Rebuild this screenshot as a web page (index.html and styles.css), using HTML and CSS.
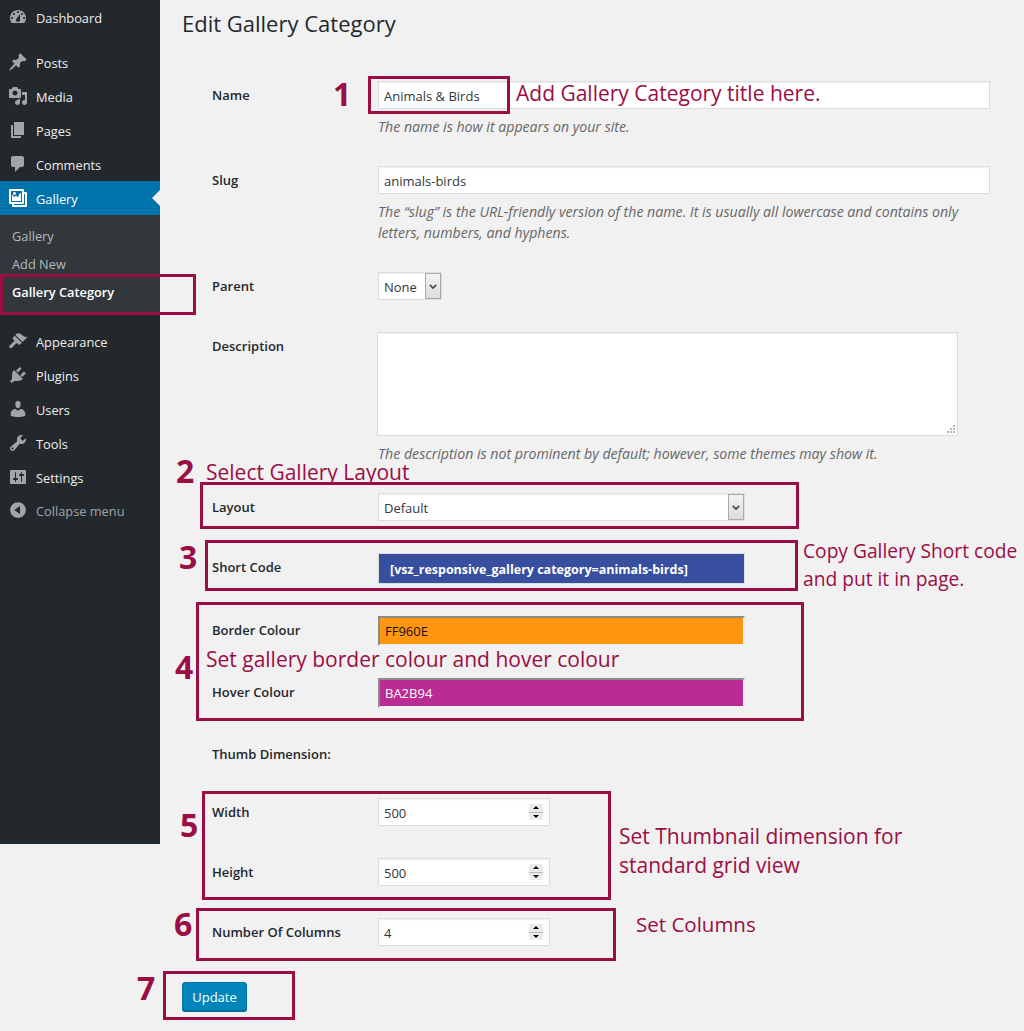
FILE: index.html
```html
<!DOCTYPE html>
<html lang="en">
  <head>
    <meta charset="UTF-8" />
    <meta name="viewport" content="width=device-width, initial-scale=1.0" />
    <title>Edit Gallery Category</title>
    <link rel="stylesheet" href="styles.css">
  </head>
  <body>
    <nav class="sidebar">
      <a class="menu-item" href="#"><svg viewBox="0 0 20 20"><path fill-rule="evenodd" d="M3.76 16h12.48c1.1-1.37 1.76-3.11 1.76-5 0-4.42-3.58-8-8-8s-8 3.58-8 8c0 1.89.66 3.63 1.76 5zM10 4c.55 0 1 .45 1 1s-.45 1-1 1-1-.45-1-1 .45-1 1-1zM6 6c.55 0 1 .45 1 1s-.45 1-1 1-1-.45-1-1 .45-1 1-1zm8 0c.55 0 1 .45 1 1s-.45 1-1 1-1-.45-1-1 .45-1 1-1zm-5.37 5.55L12 7v6c0 1.1-.9 2-2 2s-2-.9-2-2c0-.57.24-1.08.63-1.45zM4 10c.55 0 1 .45 1 1s-.45 1-1 1-1-.45-1-1 .45-1 1-1zm12 0c.55 0 1 .45 1 1s-.45 1-1 1-1-.45-1-1 .45-1 1-1z"/></svg>Dashboard</a>
      <div class="menu-sep"></div>
      <a class="menu-item" href="#"><svg viewBox="0 0 20 20"><path d="M10.44 3.02l1.82-1.82 6.36 6.35-1.83 1.82c-1.05-.68-2.48-.57-3.41.36l-.75.75c-.92.93-1.04 2.35-.35 3.41l-1.83 1.82-2.41-2.41-2.8 2.79c-.42.42-3.38 2.71-3.8 2.29s1.86-3.39 2.28-3.81l2.79-2.79L4.1 9.36l1.83-1.82c1.05.69 2.48.57 3.4-.36l.75-.75c.93-.92 1.05-2.35.36-3.41z"/></svg>Posts</a>
      <a class="menu-item" href="#"><svg viewBox="0 0 20 20"><path fill-rule="evenodd" d="M13 11V4c0-.55-.45-1-1-1h-1.67L9 1H5L3.67 3H2c-.55 0-1 .45-1 1v7c0 .55.45 1 1 1h10c.55 0 1-.45 1-1zM7 4.5c1.38 0 2.5 1.12 2.5 2.5S8.38 9.5 7 9.5 4.5 8.38 4.5 7 5.62 4.5 7 4.5zM14 6h5v10.5c0 1.38-1.12 2.5-2.5 2.5S14 17.88 14 16.5s1.12-2.5 2.5-2.5c.17 0 .34.02.5.05V9h-3V6zm-4 8.05V13h2v3.5c0 1.38-1.12 2.5-2.5 2.5S7 17.88 7 16.5 8.12 14 9.5 14c.17 0 .34.02.5.05z"/></svg>Media</a>
      <a class="menu-item" href="#"><svg viewBox="0 0 20 20"><path d="M6 15V2h10v13H6zm-1 1h8v2H3V5h2v11z"/></svg>Pages</a>
      <a class="menu-item" href="#"><svg viewBox="0 0 20 20"><path d="M5 2h9c1.1 0 2 .9 2 2v7c0 1.1-.9 2-2 2h-2l-5 5v-5H5c-1.1 0-2-.9-2-2V4c0-1.1.9-2 2-2z"/></svg>Comments</a>
      <a class="menu-item active" href="#"><svg viewBox="0 0 20 20"><path fill-rule="evenodd" d="M16 4h1.96c.57 0 1.04.47 1.04 1.04v12.92c0 .57-.47 1.04-1.04 1.04H5.04C4.47 19 4 18.53 4 17.96V16H2.04C1.47 16 1 15.53 1 14.96V2.04C1 1.47 1.47 1 2.04 1h12.92c.57 0 1.04.47 1.04 1.04V4zM3 14h11V3H3v11zm5-8.5C8 4.67 7.33 4 6.5 4S5 4.67 5 5.5 5.67 7 6.5 7 8 6.33 8 5.5zm2 4.5s1-5 3-5v8H4V7c2 0 2 3 2 3s.33-2 2-2 2 2 2 2zm7 7V6h-1v8.96c0 .57-.47 1.04-1.04 1.04H6v1h11z"/></svg>Gallery</a>
      <div class="submenu">
        <a href="#">Gallery</a>
        <a href="#">Add New</a>
        <a class="current" href="#">Gallery Category</a>
      </div>
      <div class="menu-sep short"></div>
      <a class="menu-item" href="#"><svg viewBox="0 0 20 20"><path d="M14.48 11.06L7.41 3.99l1.5-1.5c.5-.56 2.3-.47 3.51.32 1.21.8 1.43 1.28 2.91 2.1 1.18.64 2.45 1.26 4.45.85zM13.77 11.77L6.7 4.7 4.93 6.47c-.39.39-.39 1.02 0 1.41l1.06 1.06c.39.39.39 1.03 0 1.42L1.7 14.6c-.6.6-.6 1.57 0 2.17s1.57.6 2.17 0l4.24-4.29c.39-.39 1.03-.39 1.42 0l1.06 1.06c.39.39 1.02.39 1.41 0z"/></svg>Appearance</a>
      <a class="menu-item" href="#"><svg viewBox="0 0 20 20"><path d="M13.11 4.36L9.87 7.6 8 5.73l3.24-3.24c.35-.34 1.05-.2 1.56.32.52.51.66 1.21.31 1.55zm-8 1.77l.91-1.12 9.01 9.01-1.19.84c-.71.71-2.63 1.16-3.82 1.16H6.14L4.9 17.26c-.59.59-1.54.59-2.12 0-.59-.58-.59-1.53 0-2.12l1.24-1.24v-3.88c0-1.13.4-3.19 1.09-3.89zm7.26 3.97l3.24-3.24c.34-.35 1.04-.21 1.55.31.52.51.66 1.21.31 1.55l-3.24 3.25z"/></svg>Plugins</a>
      <a class="menu-item" href="#"><svg viewBox="0 0 20 20"><path d="M10 9.25c-2.27 0-2.73-3.44-2.73-3.44C7 4.02 7.82 2 9.97 2c2.16 0 2.98 2.02 2.71 3.81 0 0-.41 3.44-2.68 3.44zm0 2.57L12.72 10c2.39 0 4.52 2.33 4.52 4.53v2.49s-3.65 1.13-7.24 1.13c-3.65 0-7.24-1.13-7.24-1.13v-2.49c0-2.25 1.94-4.48 4.47-4.48z"/></svg>Users</a>
      <a class="menu-item" href="#"><svg viewBox="0 0 20 20"><path fill-rule="evenodd" d="M16.68 9.77c-1.34 1.34-3.3 1.67-4.95.99l-5.41 6.52c-.99.99-2.59.99-3.58 0s-.99-2.59 0-3.57l6.52-5.42c-.68-1.65-.35-3.61.99-4.95 1.28-1.28 3.12-1.62 4.72-1.06l-2.89 2.89 2.82 2.82 2.86-2.87c.53 1.58.18 3.39-1.08 4.65zM3.81 16.21c.4.39 1.04.39 1.43 0 .4-.4.4-1.04 0-1.43-.39-.4-1.03-.4-1.43 0-.39.39-.39 1.03 0 1.43z"/></svg>Tools</a>
      <a class="menu-item" href="#"><svg viewBox="0 0 20 20"><path fill-rule="evenodd" d="M18 16V4c0-.55-.45-1-1-1H3c-.55 0-1 .45-1 1v12c0 .55.45 1 1 1h14c.55 0 1-.45 1-1zM8 11h1c.55 0 1 .45 1 1s-.45 1-1 1H8v1.5c0 .28-.22.5-.5.5s-.5-.22-.5-.5V13H6c-.55 0-1-.45-1-1s.45-1 1-1h1V5.5c0-.28.22-.5.5-.5s.5.22.5.5V11zm5-2h-1c-.55 0-1-.45-1-1s.45-1 1-1h1V5.5c0-.28.22-.5.5-.5s.5.22.5.5V7h1c.55 0 1 .45 1 1s-.45 1-1 1h-1v5.5c0 .28-.22.5-.5.5s-.5-.22-.5-.5V9z"/></svg>Settings</a>
      <a class="menu-item collapse" href="#"><svg viewBox="0 0 20 20"><path fill-rule="evenodd" d="M10 2.16c4.33 0 7.84 3.51 7.84 7.84s-3.51 7.84-7.84 7.84S2.16 14.33 2.16 10 5.71 2.16 10 2.16zm2 11.72V6.12L6.18 9.97z"/></svg>Collapse menu</a>
    </nav>

    <main class="content">
      <h1>Edit Gallery Category</h1>
      <form class="form">
        <div class="row row-name">
          <label>Name</label>
          <div>
            <input class="input wide" type="text" value="Animals &amp; Birds" />
            <p class="hint">The name is how it appears on your site.</p>
          </div>
        </div>
        <div class="row">
          <label>Slug</label>
          <div>
            <input class="input wide" type="text" value="animals-birds" />
            <p class="hint">The “slug” is the URL-friendly version of the name. It is usually all lowercase and contains only<br>letters, numbers, and hyphens.</p>
          </div>
        </div>
        <div class="row">
          <label>Parent</label>
          <div class="select parent-select">
            <select><option>None</option></select>
            <span class="select-arrow"><svg viewBox="0 0 10 6"><path d="M1 1l4 4 4-4" /></svg></span>
          </div>
        </div>
        <div class="row row-desc">
          <label>Description</label>
          <div>
            <div class="area-wrap">
              <textarea class="area"></textarea>
              <svg class="grip" viewBox="0 0 8 8"><path d="M6 0h2v2H6zM3 3h2v2H3zM6 3h2v2H6zM0 6h2v2H0zM3 6h2v2H3zM6 6h2v2H6z" /></svg>
            </div>
            <p class="hint">The description is not prominent by default; however, some themes may show it.</p>
          </div>
        </div>
        <div class="row">
          <label>Layout</label>
          <div class="select layout-select">
            <select><option>Default</option></select>
            <span class="select-arrow"><svg viewBox="0 0 10 6"><path d="M1 1l4 4 4-4" /></svg></span>
          </div>
        </div>
        <div class="row row-gap">
          <label>Short Code</label>
          <input class="input code" type="text" value="[vsz_responsive_gallery category=animals-birds]" />
        </div>
        <div class="row row-gap">
          <label>Border Colour</label>
          <input class="input colour colour-border" type="text" value="FF960E" />
        </div>
        <div class="row row-hover">
          <label>Hover Colour</label>
          <input class="input colour colour-hover" type="text" value="BA2B94" />
        </div>
        <div class="row row-thumb">
          <label>Thumb Dimension:</label>
        </div>
        <div class="row row-width">
          <label>Width</label>
          <div class="number">
            <input class="input" type="text" value="500" />
            <span class="spin"><i class="up"></i><i class="down"></i></span>
          </div>
        </div>
        <div class="row row-gap">
          <label>Height</label>
          <div class="number">
            <input class="input" type="text" value="500" />
            <span class="spin"><i class="up"></i><i class="down"></i></span>
          </div>
        </div>
        <div class="row row-gap">
          <label>Number Of Columns</label>
          <div class="number">
            <input class="input" type="text" value="4" />
            <span class="spin"><i class="up"></i><i class="down"></i></span>
          </div>
        </div>
        <button class="btn-update" type="button">Update</button>
      </form>
    </main>

    <!-- annotations drawn over the screenshot -->
    <div class="box box-menu"></div>
    <div class="box box-name"></div>
    <div class="box box-layout"></div>
    <div class="box box-code"></div>
    <div class="box box-colour"></div>
    <div class="box box-thumb"></div>
    <div class="box box-cols"></div>
    <div class="box box-update"></div>

    <span class="num num-1">1</span>
    <span class="num num-2">2</span>
    <span class="num num-3">3</span>
    <span class="num num-4">4</span>
    <span class="num num-5">5</span>
    <span class="num num-6">6</span>
    <span class="num num-7">7</span>

    <p class="note note-name">Add Gallery Category title here.</p>
    <p class="note note-layout">Select Gallery Layout</p>
    <p class="note note-code">Copy Gallery Short code<br>and put it in page.</p>
    <p class="note note-colour">Set gallery border colour and hover colour</p>
    <p class="note note-thumb">Set Thumbnail dimension for<br>standard grid view</p>
    <p class="note note-cols">Set Columns</p>
  </body>
</html>
```

FILE: styles.css
```css
* {
  box-sizing: border-box;
}

html, body {
  margin: 0;
  height: 1031px;
  overflow: hidden;
}

body {
  position: relative;
  display: flex;
  align-items: flex-start;
  background: #f1f1f1;
  color: #23282d;
  font-family: "Open Sans", sans-serif;
  font-size: 13px;
}

/* sidebar */
.sidebar {
  width: 160px;
  height: 844px;
  flex: none;
  background: #23282d;
  font-size: 12.8px;
}

.menu-item {
  position: relative;
  display: flex;
  align-items: center;
  gap: 8px;
  height: 34px;
  padding: 2px 0 0 8px;
  color: #eee;
  text-decoration: none;
}

.menu-item svg {
  width: 20px;
  height: 20px;
  margin-top: -2px;
  fill: #a0a5aa;
}

.menu-sep {
  height: 11px;
}

.menu-sep.short {
  height: 10px;
}

.menu-item.active {
  background: #0073aa;
  color: #fff;
}

.menu-item.active svg {
  fill: #fff;
}

.menu-item.active::after {
  content: "";
  position: absolute;
  right: 0;
  top: 9px;
  border: 8px solid transparent;
  border-right-color: #f1f1f1;
  border-left-width: 0;
}

.menu-item.collapse {
  margin-top: -1px;
  color: #a0a5aa;
}

.submenu {
  display: flex;
  flex-direction: column;
  height: 99px;
  padding-top: 7px;
  background: #32373c;
}

.submenu a {
  height: 28px;
  padding-left: 12px;
  color: #b4b9be;
  line-height: 28px;
  text-decoration: none;
}

.submenu a.current {
  color: #fff;
  font-weight: 600;
}

/* form */
.content {
  flex: 1;
  padding: 0 0 0 22px;
}

h1 {
  margin: 0;
  padding-top: 9px;
  height: 81px;
  font-size: 22px;
  font-weight: 400;
  line-height: 29px;
}

.form {
  padding-left: 30px;
}

.row {
  display: grid;
  grid-template-columns: 166px 1fr;
  align-items: start;
  margin-top: 29px;
}

.row-name {
  margin-top: 0;
}

.row-desc, .row-gap {
  margin-top: 32px;
}

.row-hover {
  margin-top: 32px;
}

.row-thumb {
  margin-top: 32px;
}

.row-width {
  margin-top: 30px;
}

label {
  font-weight: 600;
  line-height: 28px;
}

.input {
  display: block;
  width: 172px;
  height: 28px;
  padding: 1px 5px 0;
  border: 1px solid #ddd;
  box-shadow: inset 0 1px 2px rgba(0, 0, 0, 0.07);
  background: #fff;
  color: #32373c;
  font-family: inherit;
  font-size: 13px;
}

.input.wide {
  width: 612px;
}

.hint {
  margin: 7px 0 0;
  color: #666;
  font-size: 14.15px;
  font-style: italic;
  line-height: 21px;
}

.select {
  position: relative;
  height: 28px;
}

.select select {
  display: block;
  width: 100%;
  height: 100%;
  padding: 1px 5px 0;
  border: 1px solid #ddd;
  border-radius: 0;
  background: #fff;
  box-shadow: inset 0 1px 2px rgba(0, 0, 0, 0.07);
  color: #32373c;
  font-family: inherit;
  font-size: 13px;
  appearance: none;
}

.select-arrow {
  position: absolute;
  top: 1px;
  right: 1px;
  bottom: 1px;
  display: flex;
  align-items: center;
  justify-content: center;
  width: 16px;
  border: 1px solid #a9a9a9;
  background: linear-gradient(#f3f3f3, #dcdcdc);
}

.select-arrow svg {
  width: 8px;
  height: 5px;
  fill: none;
  stroke: #444;
  stroke-width: 2;
}

.parent-select {
  width: 64px;
}

.layout-select {
  width: 367px;
}

.area-wrap {
  position: relative;
  width: 581px;
  height: 104px;
  margin-left: -1px;
}

.area {
  display: block;
  width: 100%;
  height: 100%;
  border: 1px solid #ddd;
  background: #fff;
  box-shadow: inset 0 1px 2px rgba(0, 0, 0, 0.07);
  resize: none;
}

.grip {
  position: absolute;
  right: 3px;
  bottom: 3px;
  width: 8px;
  height: 8px;
  fill: #b5b5b5;
}

.input.code {
  width: 367px;
  height: 31px;
  padding-left: 11px;
  background: #374f9e;
  box-shadow: none;
  color: #fff;
  font-weight: 700;
  font-size: 12.5px;
}

.input.colour {
  width: 367px;
  height: 30px;
  padding: 0 0 0 5px;
  border: 2px solid;
  border-color: #8a8a8a #f1f1f1 #f1f1f1 #8a8a8a;
  box-shadow: none;
}

.colour-border {
  background: #ff960e;
  color: #111;
}

.colour-hover {
  background: #ba2b94;
  color: #fff;
}

.number {
  position: relative;
  width: 172px;
}

.spin {
  position: absolute;
  top: 6px;
  right: 7px;
  display: flex;
  flex-direction: column;
  gap: 1px;
  width: 14px;
  height: 16px;
  background: #bbb;
}

.spin i {
  position: relative;
  flex: 1;
  background: #ebebeb;
}

.spin i::after {
  content: "";
  position: absolute;
  left: 4px;
  top: 2px;
  border: 3px solid transparent;
  border-top-width: 0;
  border-bottom-color: #000;
}

.spin .down::after {
  border-top: 3px solid #000;
  border-bottom-width: 0;
}

.btn-update {
  display: block;
  width: 65px;
  height: 29px;
  margin: 36px 0 0 -30px;
  padding: 0;
  border: 1px solid #0073aa;
  border-radius: 3px;
  background: #0085ba;
  box-shadow: 0 1px 0 #006799;
  color: #fff;
  font-family: inherit;
  font-size: 13px;
}

/* annotations */
.box {
  position: absolute;
  border: 3px solid #9b0d45;
}

.box-menu { left: 0; top: 274px; width: 196px; height: 41px; }
.box-name { left: 368px; top: 76px; width: 142px; height: 38px; }
.box-layout { left: 200px; top: 482px; width: 599px; height: 47px; }
.box-code { left: 205px; top: 540px; width: 593px; height: 51px; }
.box-colour { left: 196px; top: 602px; width: 608px; height: 119px; }
.box-thumb { left: 202px; top: 791px; width: 409px; height: 109px; }
.box-cols { left: 196px; top: 908px; width: 420px; height: 53px; }
.box-update { left: 163px; top: 971px; width: 132px; height: 49px; }

.num {
  position: absolute;
  color: #9b0d45;
  font-size: 32px;
  font-weight: 700;
  line-height: 40px;
}

.num-1 { left: 333px; top: 74px; }
.num-2 { left: 176px; top: 451px; }
.num-3 { left: 179px; top: 537px; }
.num-4 { left: 175px; top: 647px; }
.num-5 { left: 180px; top: 805px; }
.num-6 { left: 174px; top: 904px; }
.num-7 { left: 137px; top: 968px; }

.note {
  position: absolute;
  margin: 0;
  color: #9b0d45;
  font-size: 21px;
  line-height: 28px;
  white-space: nowrap;
}

.note-name { left: 516px; top: 79px; }
.note-layout { left: 206px; top: 458px; }
.note-code { left: 803px; top: 537px; font-size: 19.2px; }
.note-colour { left: 206px; top: 645px; }
.note-thumb { left: 619px; top: 822px; line-height: 29px; }
.note-cols { left: 636px; top: 910px; font-size: 20.5px; }
```
